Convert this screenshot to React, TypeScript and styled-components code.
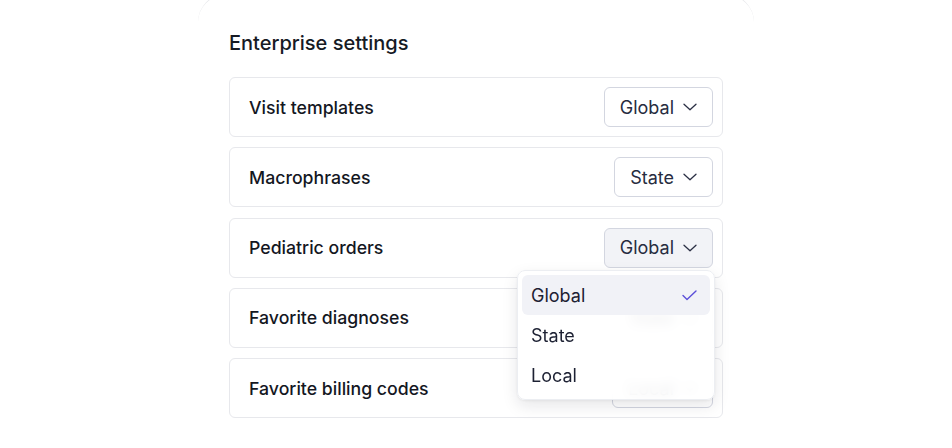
import React from 'react';
import styled, {createGlobalStyle} from 'styled-components';

const GlobalStyle = createGlobalStyle`
  html, body {
    margin: 0;
    padding: 0;
    background: #ffffff;
    font-family: Inter, "Noto Sans", sans-serif;
  }
`;

const Page = styled.div`
  width: 952px;
  height: 448px;
  overflow: hidden;
  display: flex;
  justify-content: center;
`;

const Card = styled.section`
  width: 556px;
  margin-top: -6px;
  padding: 34px 31px 0;
  box-sizing: border-box;
  border-top: 1px solid #e6e7ea;
  border-radius: 28px 28px 0 0;
`;

const Title = styled.h2`
  margin: 0 0 20px;
  font-size: 20px;
  font-weight: 470;
  line-height: 28px;
  color: #161a24;
`;

const List = styled.div`
  display: flex;
  flex-direction: column;
  gap: 10.25px;
`;

const Row = styled.div`
  position: relative;
  height: 60px;
  box-sizing: border-box;
  display: flex;
  align-items: center;
  justify-content: space-between;
  padding: 0 9px 0 19px;
  border: 1px solid #e7e8ec;
  border-radius: 6px;
  background: #ffffff;
`;

const Label = styled.span`
  font-size: 17.7px;
  font-weight: 500;
  color: #14171f;
`;

const SelectButton = styled.button<{$open?: boolean}>`
  height: 40px;
  display: flex;
  align-items: center;
  gap: 9px;
  padding: 0 15px;
  box-sizing: border-box;
  border: 1px solid #d3d6e0;
  border-radius: 6px;
  background: ${(p) => (p.$open ? '#f2f3f7' : '#ffffff')};
  font-family: inherit;
  font-size: 18px;
  font-weight: 400;
  color: #272c40;
`;

const Menu = styled.div`
  position: absolute;
  top: 51px;
  right: 7px;
  z-index: 2;
  width: 198px;
  box-sizing: border-box;
  padding: 4px;
  display: flex;
  flex-direction: column;
  border: 1px solid #eceef2;
  border-radius: 8px;
  background: rgba(255, 255, 255, 0.9);
  backdrop-filter: blur(6px);
  box-shadow: 0 6px 16px rgba(20, 24, 40, 0.1), 0 1px 3px rgba(20, 24, 40, 0.06);
`;

const MenuItem = styled.div<{$active?: boolean}>`
  height: 40px;
  box-sizing: border-box;
  display: flex;
  align-items: center;
  justify-content: space-between;
  padding: 1px 13px 0 9px;
  border-radius: 6px;
  background: ${(p) => (p.$active ? '#f1f2f7' : 'transparent')};
  font-size: 18px;
  font-weight: 400;
  color: #1d2133;
`;

const Chevron = () => (
  <svg width="14" height="8" viewBox="0 0 14 8" fill="none">
    <path d="M1 1.2L7 6.8L13 1.2" stroke="#2a2f44" strokeWidth="1.3" strokeLinecap="round" strokeLinejoin="round" />
  </svg>
);

const Check = () => (
  <svg width="15" height="11" viewBox="0 0 15 11" fill="none">
    <path d="M1 5.5L5 9.5L14 1" stroke="#5b4fd9" strokeWidth="1.4" strokeLinecap="round" strokeLinejoin="round" />
  </svg>
);

const settings = [
  {label: 'Visit templates', value: 'Global'},
  {label: 'Macrophrases', value: 'State'},
  {label: 'Pediatric orders', value: 'Global', open: true},
  {label: 'Favorite diagnoses', value: 'State'},
  {label: 'Favorite billing codes', value: 'Local'},
];

const options = ['Global', 'State', 'Local'];

const App = () => {
  return (
    <Page>
      <GlobalStyle />
      <Card>
        <Title>Enterprise settings</Title>
        <List>
          {settings.map((item) => (
            <Row key={item.label}>
              <Label>{item.label}</Label>
              <SelectButton $open={item.open}>
                {item.value}
                <Chevron />
              </SelectButton>
              {item.open &&
                <Menu>
                  {options.map((opt) => (
                    <MenuItem key={opt} $active={opt === item.value}>
                      {opt}
                      {opt === item.value && <Check />}
                    </MenuItem>
                  ))}
                </Menu>
              }
            </Row>
          ))}
        </List>
      </Card>
    </Page>
  );
};

export default App;
